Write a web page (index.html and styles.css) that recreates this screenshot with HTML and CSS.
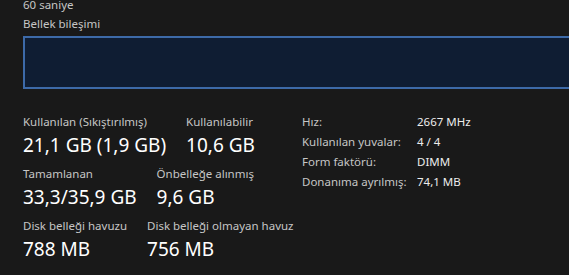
FILE: index.html
```html
<!DOCTYPE html>
<html lang="tr">
<head>
  <meta charset="UTF-8">
  <title>Bellek</title>
  <link rel="stylesheet" href="styles.css">
</head>
<body>

  <div id="panel">
    <p class="caption">60 saniye</p>
    <p class="caption title">Bellek bileşimi</p>
    <div class="composition"></div>

    <div class="stats">
      <div class="groups">
        <div class="row">
          <div class="stat">
            <p class="label">Kullanılan (Sıkıştırılmış)</p>
            <p class="value">21,1 GB (1,9 GB)</p>
          </div>
          <div class="stat">
            <p class="label">Kullanılabilir</p>
            <p class="value">10,6 GB</p>
          </div>
        </div>
        <div class="row">
          <div class="stat">
            <p class="label">Tamamlanan</p>
            <p class="value">33,3/35,9 GB</p>
          </div>
          <div class="stat">
            <p class="label">Önbelleğe alınmış</p>
            <p class="value">9,6 GB</p>
          </div>
        </div>
        <div class="row">
          <div class="stat">
            <p class="label">Disk belleği havuzu</p>
            <p class="value">788 MB</p>
          </div>
          <div class="stat">
            <p class="label">Disk belleği olmayan havuz</p>
            <p class="value">756 MB</p>
          </div>
        </div>
      </div>

      <div class="specs">
        <span class="key">Hız:</span><span class="val">2667 MHz</span>
        <span class="key">Kullanılan yuvalar:</span><span class="val">4 / 4</span>
        <span class="key">Form faktörü:</span><span class="val">DIMM</span>
        <span class="key">Donanıma ayrılmış:</span><span class="val">74,1 MB</span>
      </div>
    </div>
  </div>

</body>
</html>
```

FILE: styles.css
```css
body {
  background-color: #191919;
  font-family: "Noto Sans", "Open Sans", sans-serif;
  color: #c6c6c6;
  margin: 0;
  padding: 0;
  overflow: hidden;
}

#panel {
  padding-left: 23px;
  margin-top: -3px;
}

p {
  margin: 0;
}

.caption {
  font-size: 11.5px;
  line-height: 16px;
  color: #c6c6c6;
}

.title {
  margin-top: 3px;
}

.composition {
  margin-top: 4px;
  width: 700px;
  height: 49px;
  background-color: #0f1d33;
  border: 2px solid #3d6aa8;
}

.stats {
  display: flex;
  margin-top: 25px;
}

.groups {
  width: 279px;
}

.row {
  display: flex;
  gap: 20px;
  margin-bottom: 8px;
}

.label {
  font-size: 11.5px;
  line-height: 16px;
  color: #c6c6c6;
}

.value {
  font-size: 19px;
  line-height: 26px;
  color: #ffffff;
  margin-top: 2px;
}

.specs {
  display: grid;
  grid-template-columns: 115px auto;
  grid-auto-rows: 20px;
  align-content: start;
  font-size: 11.5px;
  line-height: 20px;
  margin-top: -2px;
}

.key {
  color: #c6c6c6;
}

.val {
  color: #ececec;
}
```
